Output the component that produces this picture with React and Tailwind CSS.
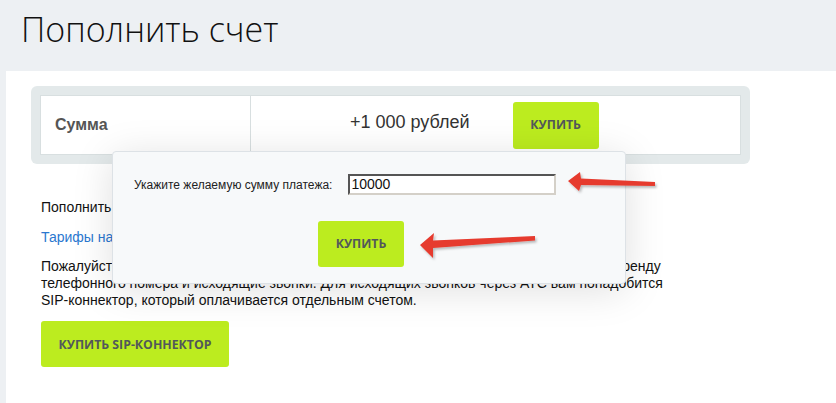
import React from "react";

function Btn({ children, className = "" }) {
  return (
    <div className={"flex items-center justify-center rounded-[3px] bg-[#bcec1f] text-[12.3px] font-bold uppercase text-[#52585a] font-['Open_Sans',sans-serif] " + className}>
      {children}
    </div>
  );
}

function Arrows() {
  return (
    <svg className="absolute left-0 top-0 pointer-events-none" width="836" height="403" viewBox="0 0 836 403">
      <defs>
        <filter id="sh" x="-20%" y="-50%" width="140%" height="200%">
          <feDropShadow dx="1.5" dy="2" stdDeviation="1" floodColor="#000" floodOpacity="0.25" />
        </filter>
      </defs>
      <g fill="#e63b2e" filter="url(#sh)">
        <polygon points="568,181 580,172 581,178.5 655,182 655,186 581,185 579,191" />
        <polygon points="420,245 434,233 433,240.5 535,236 535,240.5 433,248 433,258" />
      </g>
    </svg>
  );
}

export default function App() {
  return (
    <div className="relative w-[836px] h-[403px] overflow-hidden bg-[#edf0f3] font-['Liberation_Sans',Arial,sans-serif]">
      <div className="h-[71px] pl-[21px] pt-[7px]">
        <h1 className="font-['Open_Sans',sans-serif] font-light text-[34px] leading-[44px] text-[#111]">Пополнить счет</h1>
      </div>

      <div className="ml-[6px] h-[332px] bg-white pl-[25px] pt-[15px]">
        <div className="w-[719px] rounded-[6px] bg-[#e3e9ea] p-[9px]">
          <div className="flex h-[60px] border border-[#d8dfe0] bg-white">
            <div className="flex w-[210px] items-center border-r border-[#d8dfe0] pl-[14px] text-[16px] font-bold text-[#555]">Сумма</div>
            <div className="flex flex-1 items-center pl-[99px]">
              <span className="text-[18px] text-[#333] -mt-[6px]">+1 000 рублей</span>
              <Btn className="ml-[43px] h-[47px] w-[86px]">Купить</Btn>
            </div>
          </div>
        </div>

        <div className="pl-[10px] text-[14px] leading-[17px] text-[#111]">
          <p className="mt-[35px]">Пополнить счет можно банковской картой или электронными деньгами.</p>
          <p className="mt-[13px] text-[#2b78cf]">Тарифы на услуги связи</p>
          <p className="mt-[12px] w-[720px]">
            Пожалуйста, обратите внимание, что средства на вашем счете расходуются на связь и аренду
            <br />
            телефонного номера и исходящие звонки. Для исходящих звонков через АТС вам понадобится
            <br />
            SIP-коннектор, который оплачивается отдельным счетом.
          </p>
          <Btn className="mt-[12px] h-[46px] w-[188px]">Купить SIP-коннектор</Btn>
        </div>
      </div>

      <div className="absolute left-[112px] top-[151px] h-[133px] w-[514px] rounded-[4px] border border-[#dde2e6] bg-[#f7f9fa] shadow-[0_6px_40px_rgba(0,0,0,0.13)]">
        <div className="flex items-center pl-[21px] pt-[22px]">
          <span className="text-[12px] text-[#222]">Укажите желаемую сумму платежа:</span>
          <div className="ml-[16px] flex h-[21px] w-[208px] items-center border-[2px] border-t-[#555] border-l-[#555] border-b-[#d4d0c8] border-r-[#d4d0c8] border-solid bg-white pl-[1px] text-[14px] text-[#111]">
            10000
          </div>
        </div>
        <Btn className="ml-[205px] mt-[26px] h-[46px] w-[86px]">Купить</Btn>
      </div>

      <Arrows />
    </div>
  );
}
